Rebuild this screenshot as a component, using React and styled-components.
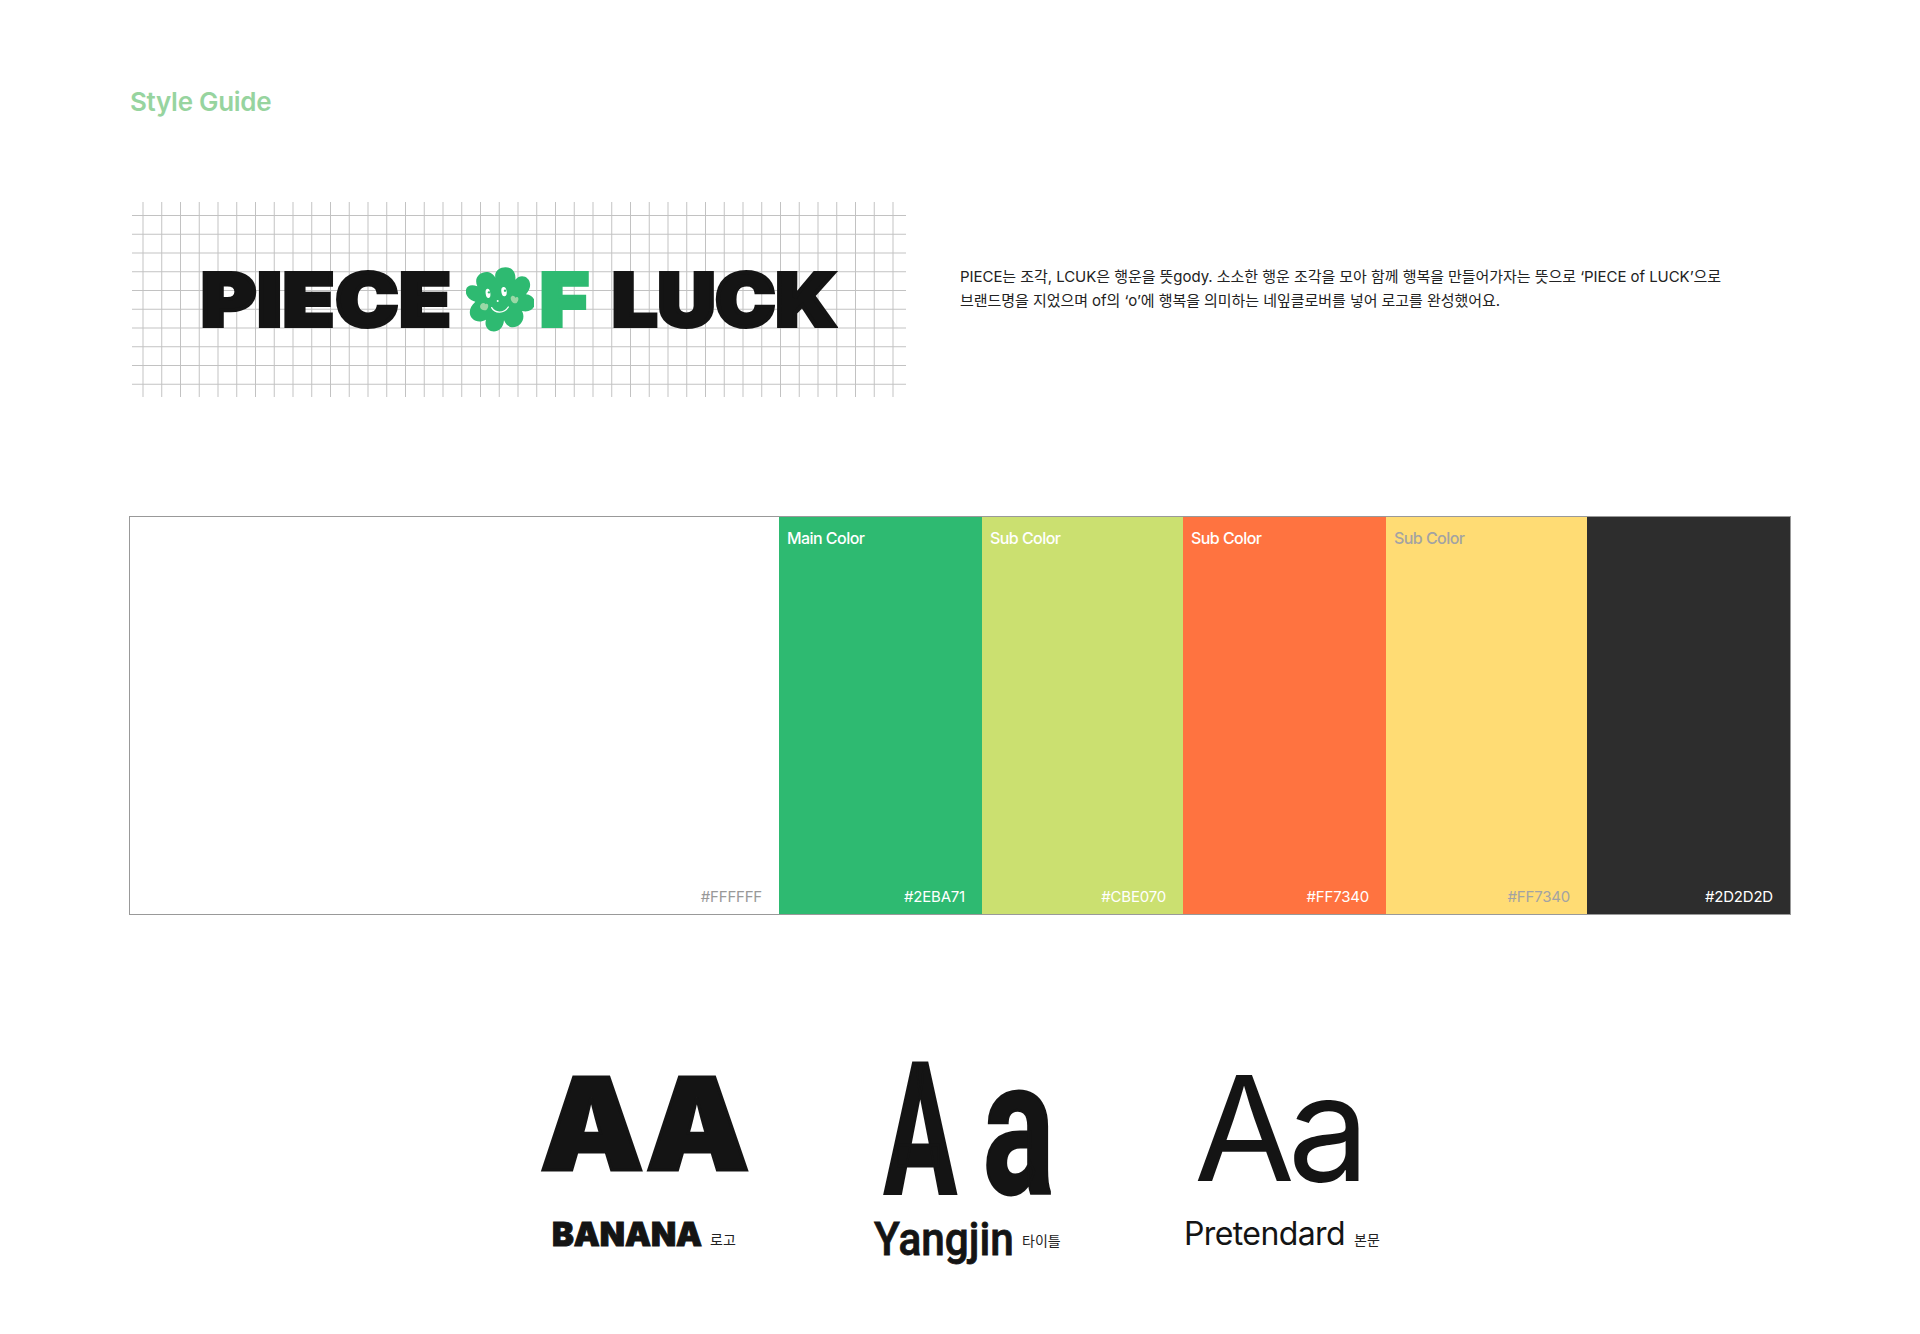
import React from "react";
import styled, { createGlobalStyle } from "styled-components";

const swatches = [
  { width: 649, bg: "#FFFFFF", hex: "#FFFFFF", hexColor: "#999999" },
  { width: 203, bg: "#2EBA71", label: "Main Color", hex: "#2EBA71", color: "#FFFFFF", hexColor: "#FFFFFF" },
  { width: 201, bg: "#CBE070", label: "Sub Color", hex: "#CBE070", color: "#FFFFFF", hexColor: "#FFFFFF" },
  { width: 203, bg: "#FF7340", label: "Sub Color", hex: "#FF7340", color: "#FFFFFF", hexColor: "#FFFFFF" },
  { width: 201, bg: "#FFDC74", label: "Sub Color", hex: "#FF7340", color: "#A3A3A3", hexColor: "#A3A3A3" },
  { width: 203, bg: "#2D2D2D", hex: "#2D2D2D", hexColor: "#FFFFFF" },
];

const GlobalStyle = createGlobalStyle`
  html, body {
    margin: 0;
    background: #fff;
  }
  body {
    font-family: Inter, "Noto Sans CJK KR", sans-serif;
    color: #141414;
  }
`;

const Page = styled.main`
  width: 1920px;
  height: 1334px;
  box-sizing: border-box;
  padding: 86px 129px 0;
  overflow: hidden;
`;

const Title = styled.h1`
  margin: 0;
  padding-left: 1px;
  font-size: 26px;
  line-height: 32px;
  font-weight: 600;
  letter-spacing: -0.3px;
  color: #97d49f;
`;

const Hero = styled.section`
  display: flex;
  align-items: flex-start;
  gap: 54px;
  margin-top: 84px;
  padding-left: 3px;
`;

// graph paper behind the logo
const LogoGrid = styled.div`
  flex: none;
  display: flex;
  align-items: center;
  width: 774px;
  height: 195px;
  box-sizing: border-box;
  padding-left: 69px;
  background-image: linear-gradient(to right, #c2c2c2 1px, transparent 1px),
    linear-gradient(to bottom, #c2c2c2 1px, transparent 1px);
  background-size: 18.75px 18.75px;
  background-position: 10.5px 0, 0 13px;
`;

const LogoWord = styled.span`
  display: block;
  flex: none;
  width: ${(p) => p.$width}px;
  margin-right: ${(p) => p.$gap || 0}px;
  font-family: Inter, sans-serif;
  font-size: 73px;
  line-height: 57px;
  font-weight: 900;
  white-space: nowrap;
  letter-spacing: ${(p) => p.$spacing || 0}px;
  color: ${(p) => p.$color || "#141414"};
  -webkit-text-stroke: 4px ${(p) => p.$color || "#141414"};
  transform: scaleX(${(p) => p.$sx || 1});
  transform-origin: left center;
`;

const Clover = styled.svg`
  flex: none;
  width: 68px;
  height: 65px;
  margin-right: 6px;
`;

const Description = styled.p`
  margin: 63px 0 0;
  font-size: 15px;
  line-height: 23.5px;
  letter-spacing: -0.05px;
  color: #222222;
  white-space: nowrap;
`;

const Palette = styled.section`
  display: flex;
  margin-top: 119px;
  height: 399px;
  box-sizing: border-box;
  border: 1px solid #999999;
`;

const Swatch = styled.div`
  flex: none;
  width: ${(p) => p.$width}px;
  box-sizing: border-box;
  display: flex;
  flex-direction: column;
  padding: 11px 17px 7px 8px;
  background: ${(p) => p.$bg};
`;

const SwatchLabel = styled.span`
  font-size: 16px;
  line-height: 20px;
  font-weight: 500;
  letter-spacing: -0.55px;
  color: ${(p) => p.$color};
`;

const SwatchHex = styled.span`
  margin-top: auto;
  text-align: right;
  font-size: 15px;
  line-height: 20px;
  letter-spacing: -0.2px;
  color: ${(p) => p.$color};
`;

const Fonts = styled.section`
  display: flex;
  align-items: flex-start;
  margin-top: 135px;
  padding-left: 411px;
`;

const FontColumn = styled.div`
  flex: none;
  width: ${(p) => p.$width}px;
  margin-right: ${(p) => p.$gap || 0}px;
`;

const Sample = styled.div`
  display: flex;
  align-items: flex-end;
  height: ${(p) => p.$height}px;
  padding-left: ${(p) => p.$indent || 0}px;
`;

const Glyph = styled.span`
  display: block;
  flex: none;
  width: ${(p) => p.$width}px;
  font-family: ${(p) => p.$font || "Inter"}, sans-serif;
  font-size: ${(p) => p.$size}px;
  font-weight: ${(p) => p.$weight};
  line-height: 1;
  letter-spacing: ${(p) => p.$spacing || 0}px;
  white-space: nowrap;
  color: #141414;
  -webkit-text-stroke: ${(p) => p.$stroke || 0}px #141414;
  transform: scaleX(${(p) => p.$sx || 1});
  transform-origin: left bottom;
`;

const Caption = styled.div`
  display: flex;
  align-items: flex-end;
  gap: ${(p) => p.$gap}px;
  padding-left: ${(p) => p.$indent || 0}px;
  margin-top: ${(p) => p.$top || 0}px;
`;

const Note = styled.span`
  flex: none;
  margin-bottom: ${(p) => p.$lift || 0}px;
  font-family: "Noto Sans CJK KR", sans-serif;
  font-size: 14px;
  line-height: 18px;
  white-space: nowrap;
  color: #222222;
`;

const CloverMark = () => (
  <Clover viewBox="18 48 204 195" aria-hidden="true">
    <path
      d="M106 80C98 42 172 32 166 86C188 58 232 90 198 130C238 134 232 190 186 180C206 218 150 252 132 208C128 258 66 248 78 206C42 226 8 186 46 152C4 140 10 90 52 106C34 66 90 46 106 80Z"
      fill="#2EBA71"
    />
    <ellipse cx="84" cy="127" rx="7" ry="14" fill="#fff" transform="rotate(-8 84 127)" />
    <ellipse cx="132" cy="122" rx="8" ry="14" fill="#fff" transform="rotate(-8 132 122)" />
    <circle cx="87" cy="124" r="3.5" fill="#2EBA71" />
    <circle cx="135" cy="119" r="3.5" fill="#2EBA71" />
    <circle cx="113" cy="150" r="3" fill="#fff" />
    <path d="M95 170C105 188 132 188 145 168" fill="none" stroke="#fff" strokeWidth="4" strokeLinecap="round" />
    <path d="M60 168C60 158 72 152 76 160C84 154 90 168 78 178C70 178 62 176 60 168Z" fill="#9BD8A6" />
    <path d="M152 140C156 130 164 134 166 140C174 134 180 144 170 156C162 160 152 152 152 140Z" fill="#9BD8A6" />
  </Clover>
);

const App = () => {
  return (
    <Page>
      <GlobalStyle />
      <Title>Style Guide</Title>

      <Hero>
        <LogoGrid>
          <LogoWord $width={247} $gap={18} $spacing={1} $sx={1.15}>PIECE</LogoWord>
          <CloverMark />
          <LogoWord $width={47} $gap={25} $color="#2EBA71" $sx={1.14}>F</LogoWord>
          <LogoWord $width={226} $sx={1.1}>LUCK</LogoWord>
        </LogoGrid>
        <Description>
          PIECE는 조각, LCUK은 행운을 뜻gody. 소소한 행운 조각을 모아 함께 행복을 만들어가자는 뜻으로 ‘PIECE of LUCK’으로
          <br />
          브랜드명을 지었으며 of의 ‘o’에 행복을 의미하는 네잎클로버를 넣어 로고를 완성했어요.
        </Description>
      </Hero>

      <Palette>
        {swatches.map((s) => (
          <Swatch key={s.bg} $width={s.width} $bg={s.bg}>
            {s.label && <SwatchLabel $color={s.color}>{s.label}</SwatchLabel>}
            <SwatchHex $color={s.hexColor}>{s.hex}</SwatchHex>
          </Swatch>
        ))}
      </Palette>

      <Fonts>
        <FontColumn $width={206} $gap={128}>
          <Sample $height={138}>
            <Glyph $size={128} $weight={900} $stroke={3} $sx={1.02} $width={206}>AA</Glyph>
          </Sample>
          <Caption $gap={10} $indent={12} $top={30}>
            <Glyph $size={33} $weight={900} $stroke={1} $sx={0.99} $width={148}>BANANA</Glyph>
            <Note $lift={3}>로고</Note>
          </Caption>
        </FontColumn>

        <FontColumn $width={189} $gap={121}>
          <Sample $height={173} $indent={10}>
            <Glyph $font="Roboto" $size={183} $weight={700} $stroke={3} $sx={0.59} $width={99}>A</Glyph>
            <Glyph $font="Roboto" $size={190} $weight={700} $stroke={3} $sx={0.7} $width={70}>a</Glyph>
          </Sample>
          <Caption $gap={10} $top={-7}>
            <Glyph $font="Roboto" $size={46} $weight={500} $stroke={0.8} $sx={0.92} $width={138}>Yangjin</Glyph>
            <Note $lift={13}>타이틀</Note>
          </Caption>
        </FontColumn>

        <FontColumn $width={200}>
          <Sample $height={151} $indent={10}>
            <Glyph $size={146} $weight={400} $spacing={-7} $width={170}>Aa</Glyph>
          </Sample>
          <Caption $gap={13} $top={17}>
            <Glyph $size={32} $weight={400} $spacing={-0.6} $width={157}>Pretendard</Glyph>
            <Note $lift={2}>본문</Note>
          </Caption>
        </FontColumn>
      </Fonts>
    </Page>
  );
};

export default App;
